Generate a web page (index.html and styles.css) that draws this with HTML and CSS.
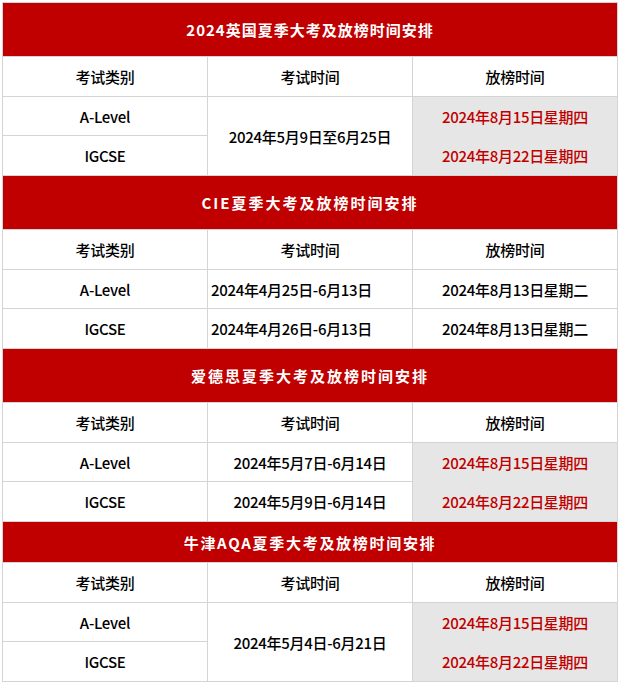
FILE: index.html
```html
<!DOCTYPE html>
<html lang="zh-CN">
<head>
<meta charset="utf-8">
<title>2024夏季大考及放榜时间安排</title>
<link rel="stylesheet" href="styles.css">
</head>
<body>
<div class="sheet">
  <div class="title t-tight">2024英国夏季大考及放榜时间安排</div>
  <div class="cell head">考试类别</div>
  <div class="cell head">考试时间</div>
  <div class="cell head">放榜时间</div>
  <div class="cell r1">A-Level</div>
  <div class="cell span2">2024年5月9日至6月25日</div>
  <div class="cell span2 result">
    <span class="half">2024年8月15日星期四</span>
    <span class="half">2024年8月22日星期四</span>
  </div>
  <div class="cell r2">IGCSE</div>

  <div class="title">CIE夏季大考及放榜时间安排</div>
  <div class="cell head">考试类别</div>
  <div class="cell head">考试时间</div>
  <div class="cell head">放榜时间</div>
  <div class="cell r1">A-Level</div>
  <div class="cell left">2024年4月25日-6月13日</div>
  <div class="cell">2024年8月13日星期二</div>
  <div class="cell r2">IGCSE</div>
  <div class="cell left">2024年4月26日-6月13日</div>
  <div class="cell">2024年8月13日星期二</div>

  <div class="title">爱德思夏季大考及放榜时间安排</div>
  <div class="cell head">考试类别</div>
  <div class="cell head">考试时间</div>
  <div class="cell head">放榜时间</div>
  <div class="cell r1">A-Level</div>
  <div class="cell">2024年5月7日-6月14日</div>
  <div class="cell span2 result">
    <span class="half">2024年8月15日星期四</span>
    <span class="half">2024年8月22日星期四</span>
  </div>
  <div class="cell r2">IGCSE</div>
  <div class="cell">2024年5月9日-6月14日</div>

  <div class="title t-short t-latin">牛津AQA夏季大考及放榜时间安排</div>
  <div class="cell head">考试类别</div>
  <div class="cell head">考试时间</div>
  <div class="cell head">放榜时间</div>
  <div class="cell r1">A-Level</div>
  <div class="cell span2">2024年5月4日-6月21日</div>
  <div class="cell span2 result">
    <span class="half">2024年8月15日星期四</span>
    <span class="half">2024年8月22日星期四</span>
  </div>
  <div class="cell r2">IGCSE</div>
</div>
</body>
</html>
```
FILE: styles.css
```css
html, body {
  margin: 0;
  padding: 0;
  background: #ffffff;
}

body {
  font-family: "Noto Sans CJK SC", "Noto Sans", sans-serif;
  font-size: 15px;
  color: #000000;
}

.sheet {
  margin: 2px 0 0 2px;
  width: 614px;
  display: grid;
  grid-template-columns: 204px 204px 204px;
  gap: 1px;
  background: #d4d4d4;
  border: 1px solid #d4d4d4;
}

.title {
  grid-column: 1 / span 3;
  height: 53px;
  background: #c00000;
  color: #ffffff;
  font-weight: 700;
  letter-spacing: 2px;
  display: flex;
  align-items: center;
  justify-content: center;
}

.t-tight {
  letter-spacing: 1px;
}

.t-short {
  height: 40px;
}

.t-latin {
  letter-spacing: 1.7px;
}

.cell {
  background: #ffffff;
  display: flex;
  align-items: center;
  justify-content: center;
  font-weight: 500;
  letter-spacing: -0.3px;
  white-space: nowrap;
}

.head {
  height: 39px;
}

.r1 {
  height: 38px;
}

.r2 {
  height: 39px;
}

.left {
  justify-content: flex-start;
  padding-left: 3px;
}

.span2 {
  grid-row: span 2;
}

.result {
  background: #e6e6e6;
  color: #c00000;
  flex-direction: column;
  align-items: stretch;
}

.half {
  flex: 1;
  display: flex;
  align-items: center;
  justify-content: center;
}
```
